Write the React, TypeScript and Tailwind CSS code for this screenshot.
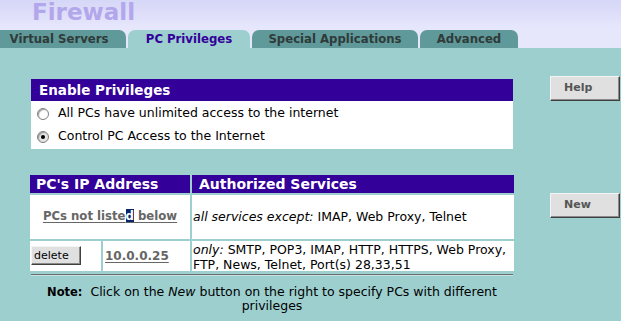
const font = "font-['DejaVu_Sans',Verdana,sans-serif]";

function Radio({ checked }: { checked?: boolean }) {
  return (
    <span
      className={`relative inline-block w-3 h-3 shrink-0 rounded-full border border-[#808080] shadow-[inset_1px_1px_1px_#9a9a9a] ${
        checked ? 'bg-[#e4e4e4]' : 'bg-white'
      }`}
    >
      {checked && <span className="absolute left-[3px] top-[3px] w-1 h-1 rounded-full bg-black" />}
    </span>
  );
}

function Button({ label, className }: { label: string; className?: string }) {
  return (
    <div
      className={`bg-[#e0e0e0] border border-t-[#f4f4f4] border-l-[#f4f4f4] border-b-[#404040] border-r-[#404040] shadow-[inset_-1px_-1px_0_#8a8a8a] ${className ?? ''}`}
    >
      {label}
    </div>
  );
}

const tabs = [
  { label: 'Virtual Servers', cls: 'w-[134px] bg-[#609999] text-[#2f3b3b]' },
  { label: 'PC Privileges', cls: 'w-[122px] bg-[#9dcfcf] text-[#330099]' },
  { label: 'Special Applications', cls: 'w-[166px] bg-[#609999] text-[#2f3b3b]' },
  { label: 'Advanced', cls: 'w-[98px] bg-[#609999] text-[#2f3b3b]' },
];

export default function App() {
  return (
    <div className={`w-[621px] h-[321px] overflow-hidden bg-[#9dcfcf] text-black ${font}`}>
      {/* title */}
      <div className="h-[29px] bg-gradient-to-b from-[#d6d6f7] to-[#e7e7fc] pl-[32px]">
        <div className="text-[23px] font-bold leading-none pt-[1px] text-[#b3a7ec]">Firewall</div>
      </div>

      {/* tabs */}
      <div className="h-[19px] bg-[#e7e7fc] flex items-end gap-[2px] -ml-[8px]">
        {tabs.map((t) => (
          <div
            key={t.label}
            className={`h-[18px] rounded-t-[7px] flex items-center justify-center pt-[2px] text-[11.7px] font-bold leading-none ${t.cls}`}
          >
            {t.label}
          </div>
        ))}
      </div>

      <div className="flex">
        {/* main column */}
        <div className="ml-[30px] w-[484px] pt-[31px]">
          <div className="mx-[1px]">
            <div className="h-[22px] bg-[#330099] text-white font-bold text-[13.5px] pl-[8px] flex items-center">
              Enable Privileges
            </div>
            <div className="bg-white h-[48px] pt-[1px] text-[12.5px]">
              <div className="h-[23px] flex items-center pl-[6px]">
                <Radio />
                <span className="ml-[9px]">All PCs have unlimited access to the internet</span>
              </div>
              <div className="h-[23px] flex items-center pl-[6px]">
                <Radio checked />
                <span className="ml-[9px]">Control PC Access to the Internet</span>
              </div>
            </div>
          </div>

          <div className="mt-[26px] grid grid-cols-[71px_87px_322px] gap-[2px]">
            <div className="col-span-2 h-[18px] bg-[#330099] text-white font-bold text-[14px] pl-[6px] flex items-center">
              PC's IP Address
            </div>
            <div className="h-[18px] bg-[#330099] text-white font-bold text-[14px] pl-[7px] flex items-center">
              Authorized Services
            </div>

            <div className="col-span-2 h-[44px] bg-white flex items-center justify-center">
              <span className="font-bold text-[11.7px] text-[#666] underline underline-offset-2">
                PCs not liste<span className="bg-[#0a246a] text-white">d</span> below
              </span>
            </div>
            <div className="h-[44px] bg-white flex items-center pl-[1px] text-[12.5px]">
              <span>
                <i>all services except:</i> IMAP, Web Proxy, Telnet
              </span>
            </div>

            <div className="h-[30px] bg-white pl-[1px] pt-[5px]">
              <Button label="delete" className="w-[50px] h-[19px] text-[11px] pl-[2px] leading-[17px]" />
            </div>
            <div className="h-[30px] bg-white flex items-center pl-[2px]">
              <span className="font-bold text-[12px] text-[#666] underline underline-offset-2">10.0.0.25</span>
            </div>
            <div className="h-[30px] bg-white pl-[1px] pt-[1px] text-[12.5px] leading-[15px]">
              <i>only:</i> SMTP, POP3, IMAP, HTTP, HTTPS, Web Proxy, FTP, News, Telnet, Port(s) 28,33,51
            </div>
          </div>

          <div className="mx-[1px] mt-[3px] border-t border-t-[#6e6e6e] border-b border-b-[#c4e2e2]" />

          <p className="mt-[9px] text-center leading-[14px] text-[12.5px]">
            <b className="text-[11.5px]">Note:</b>
            {'\u00a0\u00a0'}Click on the <i>New</i> button on the right to specify PCs with different privileges
          </p>
        </div>

        {/* right buttons */}
        <div className="ml-[36px] w-[70px] pt-[28px]">
          <Button
            label="Help"
            className="h-[25px] pl-[13px] flex items-center text-[11px] font-bold text-[#555]"
          />
          <Button
            label="New"
            className="mt-[92px] h-[25px] pl-[13px] flex items-center text-[11px] font-bold text-[#555]"
          />
        </div>
      </div>
    </div>
  );
}
